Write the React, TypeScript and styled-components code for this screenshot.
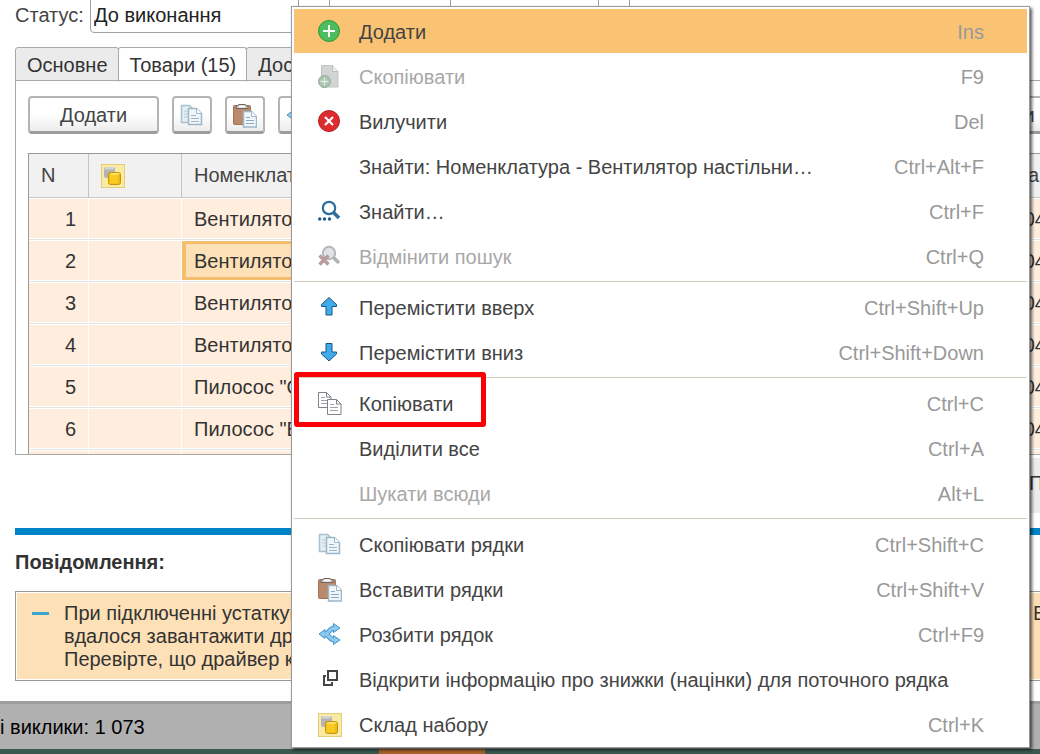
import React from "react";
import styled, { createGlobalStyle, css } from "styled-components";

const GlobalStyle = createGlobalStyle`
  *, *::before, *::after { box-sizing: border-box; }
  html, body { margin: 0; padding: 0; }
  body, button, input, select, table {
    font-family: "Liberation Sans", Arial, sans-serif;
    font-size: 20px;
  }
  body { background: #fff; color: #333; }
`;

/* ---------- page ---------- */

const Page = styled.div`
  position: relative;
  min-height: 100vh;
  display: flex;
  flex-direction: column;
  overflow: hidden;
`;

const Content = styled.main`
  flex: 1;
  display: flex;
  flex-direction: column;
  padding-left: 15px;
`;

const FieldRow = styled.div`
  display: flex;
  height: 33px;
  overflow: hidden;
`;

const FieldLabel = styled.label`
  width: 75px;
  line-height: 31px;
  color: #444;
`;

const FieldSelect = styled.select<{ $width: number; $gap?: number }>`
  appearance: none;
  width: ${(p) => p.$width}px;
  height: 38px;
  margin: -5px 0 0 ${(p) => p.$gap ?? 0}px;
  padding: 2px 3px 0;
  border: 1px solid #a0a0a0;
  border-radius: 4px;
  background: linear-gradient(#a0a0a0, #a0a0a0) right 30px top 0 / 1px 100% no-repeat #fff;
  color: #222;
`;

const Tabs = styled.div`
  display: flex;
  margin-top: 14px;
  height: 34px;
`;

const Tab = styled.button<{ $active?: boolean }>`
  height: ${(p) => (p.$active ? 35 : 34)}px;
  padding: 2px 10px 0 11px;
  border: 1px solid #a8a8a8;
  border-bottom-color: ${(p) => (p.$active ? "#fff" : "#a8a8a8")};
  border-radius: 3px 3px 0 0;
  background: ${(p) => (p.$active ? "#fff" : "#ebebeb")};
  color: #333;
  white-space: nowrap;
  & + & { margin-left: -1px; }
`;

const Panel = styled.section`
  height: 375px;
  margin: -1px -20px 0 0;
  padding: 15px 0 0 12px;
  border: 1px solid #a8a8a8;
  overflow: hidden;
`;

const Toolbar = styled.div`
  display: flex;
  gap: 13px;
  height: 38px;
  margin-bottom: 19px;
`;

const ToolButton = styled.button<{ $wide?: boolean; $last?: boolean }>`
  display: flex;
  align-items: center;
  justify-content: center;
  width: ${(p) => (p.$wide ? 131 : 40)}px;
  padding: 2px 0 0;
  border: 2px solid #b4b4b4;
  border-bottom: 3px solid #9c9c9c;
  border-radius: 4px;
  background: linear-gradient(#fff 50%, #ececec);
  color: #444;
  ${(p) =>
    p.$last &&
    css`
      width: 60px;
      margin-left: auto;
      padding: 2px 0 0;
    `}
`;

const Grid = styled.table`
  width: 100%;
  table-layout: fixed;
  border-collapse: separate;
  border-spacing: 0;
  border-top: 1px solid #999;
  border-left: 1px solid #999;
`;

const HeadCell = styled.th<{ $w?: number; $end?: boolean }>`
  width: ${(p) => (p.$w ? `${p.$w}px` : "auto")};
  height: 44px;
  padding: 0 ${(p) => (p.$end ? 19 : 12)}px 0 12px;
  border-right: 1px solid #c4c4c4;
  border-bottom: 1px solid #c8c8c8;
  background: #f1f1f1;
  color: #444;
  font-weight: normal;
  text-align: ${(p) => (p.$end ? "right" : "left")};
  white-space: nowrap;
  svg { display: block; }
`;

const Cell = styled.td<{ $align?: string; $selected?: boolean }>`
  height: 42px;
  padding: 2px 12px 0 12px;
  border-right: 1px solid #fff;
  border-bottom: 1px solid #e2e2e2;
  background: #ffeedd;
  box-shadow: inset 0 1px #fff, inset 0 -1px #fff;
  color: #333;
  text-align: ${(p) => p.$align ?? "left"};
  white-space: nowrap;
  ${(p) =>
    p.$selected &&
    css`
      background: #fde0b6;
      box-shadow: inset 0 1px #fff, inset 0 -1px #fff, inset 0 0 0 4px #f5be6c;
    `}
`;

const Totals = styled.div`
  align-self: flex-end;
  width: 140px;
  height: 55px;
  margin: 3px 0 15px;
  padding-left: 129px;
  background: #ececec;
  line-height: 50px;
  overflow: hidden;
`;

const Divider = styled.div`
  height: 7px;
  background: #0084c8;
`;

const MessagesTitle = styled.h2`
  margin: 15px 0 17px;
  font-size: 20px;
  line-height: 24px;
`;

const MessageBox = styled.div`
  display: flex;
  height: 90px;
  margin-right: -20px;
  padding: 10px 0 0 16px;
  border: 1px solid #999;
  background: #fde0b6;
  box-shadow: inset 0 0 0 1px #fff;
  line-height: 23px;
`;

const Dash = styled.span`
  width: 17px;
  height: 3px;
  margin: 10px 15px 0 0;
  background: #3ba7cf;
`;

const MessageText = styled.p`
  flex: 1;
  margin: 0;
  white-space: pre-line;
`;

const MessageEnd = styled.span`
  width: 26px;
`;

const StatusBar = styled.footer`
  height: 48px;
  margin-top: 19px;
  border-top: 3px solid #9e9e9e;
  background: #b0b0b0;
  color: #000;
  line-height: 46px;
`;

const Taskbar = styled.div`
  display: flex;
  height: 5px;
  padding-left: 379px;
  background: #3a5a4f;
`;

const TaskButton = styled.span`
  width: 106px;
  background: #a8622a;
`;

/* ---------- context menu ---------- */

const Menu = styled.div`
  position: absolute;
  top: 6px;
  left: 291px;
  right: 10px;
  padding: 2px 2px 0;
  border: 1px solid #9a9a9a;
  background: #fff;
  box-shadow: 2px 2px 3px rgba(0, 0, 0, 0.65);
`;

const MenuItem = styled.button<{ $active?: boolean }>`
  position: relative;
  display: flex;
  align-items: center;
  width: 100%;
  height: 45px;
  padding: 2px 43px 0 24px;
  border: 0;
  border-bottom: 1px solid #fff;
  background: ${(p) => (p.$active ? "#fac373" : "#fff")};
  color: #444;
  text-align: left;
  white-space: nowrap;
  &:disabled { color: #a8a8a8; }
`;

const IconSlot = styled.span`
  display: flex;
  width: 24px;
  height: 24px;
  margin-right: 17px;
`;

const ItemLabel = styled.span`
  flex: 1;
`;

const Shortcut = styled.kbd`
  font-family: inherit;
  color: #999;
`;

const Separator = styled.hr`
  height: 1px;
  margin: 2px 0 3px;
  border: 0;
  background: #cfcdbf;
`;

const Highlight = styled.span`
  position: absolute;
  top: -9px;
  left: 0;
  width: 192px;
  height: 55px;
  border: 5px solid #fb0007;
  border-radius: 3px;
  z-index: 1;
`;

/* ---------- icons ---------- */

const Svg = ({ children }: { children: React.ReactNode }) => (
  <svg width="24" height="24" viewBox="0 0 24 24" fill="none" aria-hidden="true">
    {children}
  </svg>
);

const AddIcon = () => (
  <Svg>
    <circle cx="11" cy="11" r="10.5" fill="#4cbd5c" stroke="#2f9a36" />
    <path d="M11 5v12M5 11h12" stroke="#fff" strokeWidth="2" />
  </Svg>
);

const CopyAddIcon = () => (
  <Svg>
    <path d="M3.500 0.500h11l5.500 6v15.500h-16.500z" fill="#d2d3d4" stroke="#c2c3c4" />
    <path d="M14.500 0.500v6h5.500" fill="#eee" stroke="#bcbdbe" />
    <circle cx="6.500" cy="16.500" r="6" fill="#a9c3ad" stroke="#94ac98" />
    <path d="M6.500 12.500v8M2.500 16.500h8" stroke="#e2ece3" strokeWidth="1.300" />
  </Svg>
);

const DeleteIcon = () => (
  <Svg>
    <circle cx="11" cy="11" r="10.5" fill="#dc2c30" stroke="#b51f22" />
    <path d="M7 7l8 8M15 7l-8 8" stroke="#fff" strokeWidth="2.200" />
  </Svg>
);

const FindIcon = () => (
  <Svg>
    <circle cx="11" cy="8" r="6.200" stroke="#2d6e9e" strokeWidth="2.200" />
    <path d="M15.500 12.500l5.500 5.500" stroke="#2d6e9e" strokeWidth="3.500" />
    <circle cx="1.700" cy="19" r="1.700" fill="#1d5d8e" />
    <circle cx="6.500" cy="19" r="1.700" fill="#1d5d8e" />
    <circle cx="11.500" cy="19" r="1.700" fill="#1d5d8e" />
  </Svg>
);

const CancelFindIcon = () => (
  <Svg>
    <circle cx="11" cy="8" r="6.200" fill="#dfe3e7" stroke="#b3b8bc" strokeWidth="2" />
    <path d="M15.500 12.500l5.500 5.500" stroke="#aeb3b6" strokeWidth="3.500" />
    <path d="M1.500 10.500l9 9M10.500 10.500l-9 9" stroke="#b99d9d" strokeWidth="3.500" />
  </Svg>
);

const UpIcon = () => (
  <Svg>
    <path d="M11 1.500l7.500 7v2h-4.500v8.500h-6v-8.500h-4.500v-2z" fill="#3fabea" stroke="#17567f" strokeLinejoin="round" />
  </Svg>
);

const DownIcon = () => (
  <Svg>
    <path d="M11 20l7.500-7v-2h-4.500v-8.500h-6v8.500h-4.500v2z" fill="#3fabea" stroke="#17567f" strokeLinejoin="round" />
  </Svg>
);

const CopyOutlineIcon = () => (
  <Svg>
    <path d="M0.500 0.500h8l4.500 4.500v10.500h-12.500zM8.500 0.500v4.500h4.500" fill="#fff" stroke="#7d8287" />
    <path d="M3 5.500h4M3 8.500h6M3 11.500h6" stroke="#a0a4a8" />
    <path d="M9.500 7.500h9l4.500 4.500v10.500h-13.500zM18.500 7.500v4.500h4.500" fill="#fff" stroke="#7d8287" />
    <path d="M12 12.500h4M12 15.500h8M12 18.500h8" stroke="#a0a4a8" />
  </Svg>
);

const CopyRowsIcon = () => (
  <Svg>
    <path d="M1.500 1.500h8l4 4v13h-12z" fill="#e4eef5" stroke="#a9bfce" strokeWidth="1.500" />
    <path d="M4 7h4M4 10h4M4 13h4" stroke="#bdccd7" />
    <path d="M8.500 4.500h8l5 5v11h-13z" fill="#f0f6fa" stroke="#9db7c9" strokeWidth="1.500" />
    <path d="M16.500 4.500v5h5" fill="#fff" stroke="#9db7c9" />
    <path d="M11 11.500h5M11 14.500h8M11 17.500h8" stroke="#9fb6c5" strokeWidth="1.200" />
  </Svg>
);

const PasteIcon = () => (
  <Svg>
    <rect x="0.500" y="1.500" width="17" height="19" rx="1" fill="#b98a6b" stroke="#a07355" />
    <path d="M3 4.500v-2l3-2h6l3 2v2z" fill="#c9c6c3" stroke="#6d6661" />
    <rect x="6" y="1.500" width="6" height="2" fill="#fff" />
    <path d="M10.500 7.500h8l5 5v10.500h-13z" fill="#f0f6fa" stroke="#9db7c9" strokeWidth="1.500" />
    <path d="M18.500 7.500v5h5" fill="#fff" stroke="#9db7c9" />
    <path d="M13 13.500h4M13 16.500h8M13 19.500h8" stroke="#86a9bf" />
  </Svg>
);

const SplitIcon = () => (
  <Svg>
    <path d="M4 11h3c4 0 4-6 10-6M7 11c4 0 4 6 10 6" stroke="#4596c8" strokeWidth="5" />
    <path
      d="M1 11l6-4.500v9zM15.500 0.500l6.500 4.500-6.500 4.500zM15.500 12.500l6.500 4.500-6.500 4.500z"
      fill="#8ccaf0"
      stroke="#4596c8"
      strokeLinejoin="round"
    />
    <path d="M4 11h3c4 0 4-6 10-6M7 11c4 0 4 6 10 6" stroke="#8ccaf0" strokeWidth="3" />
  </Svg>
);

const OpenIcon = () => (
  <Svg>
    <rect x="10" y="3" width="9" height="9" stroke="#444" strokeWidth="2" />
    <path d="M8 8h-2v9h8v-3" stroke="#444" strokeWidth="2" />
  </Svg>
);

const SetIcon = () => (
  <Svg>
    <rect x="0.500" y="0.500" width="23" height="23" fill="#fbeaa4" stroke="#e2cd7a" />
    <rect x="3" y="3" width="11" height="11" rx="2" fill="#b4b4b8" />
    <path d="M3 5.500l2-2.500h9l-2 2.500z" fill="#d4d4d8" />
    <rect x="7.500" y="8.500" width="12" height="12" rx="2" fill="#efb90e" stroke="#c99408" />
    <path d="M8.500 11l2-2h8.500l-2 2z" fill="#ffe066" />
    <rect x="8.500" y="11" width="8.500" height="8.500" rx="1" fill="#f9ca24" />
  </Svg>
);

/* ---------- data ---------- */

type Item = {
  label: string;
  keys?: string;
  icon?: React.ReactNode;
  disabled?: boolean;
  active?: boolean;
  marked?: boolean;
};

const groups: Item[][] = [
  [
    { label: "Додати", keys: "Ins", icon: <AddIcon />, active: true },
    { label: "Скопіювати", keys: "F9", icon: <CopyAddIcon />, disabled: true },
    { label: "Вилучити", keys: "Del", icon: <DeleteIcon /> },
    { label: "Знайти: Номенклатура - Вентилятор настільни…", keys: "Ctrl+Alt+F" },
    { label: "Знайти…", keys: "Ctrl+F", icon: <FindIcon /> },
    { label: "Відмінити пошук", keys: "Ctrl+Q", icon: <CancelFindIcon />, disabled: true },
  ],
  [
    { label: "Перемістити вверх", keys: "Ctrl+Shift+Up", icon: <UpIcon /> },
    { label: "Перемістити вниз", keys: "Ctrl+Shift+Down", icon: <DownIcon /> },
  ],
  [
    { label: "Копіювати", keys: "Ctrl+C", icon: <CopyOutlineIcon />, marked: true },
    { label: "Виділити все", keys: "Ctrl+A" },
    { label: "Шукати всюди", keys: "Alt+L", disabled: true },
  ],
  [
    { label: "Скопіювати рядки", keys: "Ctrl+Shift+C", icon: <CopyRowsIcon /> },
    { label: "Вставити рядки", keys: "Ctrl+Shift+V", icon: <PasteIcon /> },
    { label: "Розбити рядок", keys: "Ctrl+F9", icon: <SplitIcon /> },
    { label: "Відкрити інформацію про знижки (націнки) для поточного рядка", icon: <OpenIcon /> },
    { label: "Склад набору", keys: "Ctrl+K", icon: <SetIcon /> },
  ],
];

const rows = [
  "Вентилятор",
  "Вентилятор",
  "Вентилятор",
  "Вентилятор",
  'Пилосос "О',
  'Пилосос "Е',
  "",
];

export default function App() {
  return (
    <Page>
      <GlobalStyle />
      <Content>
        <FieldRow>
          <FieldLabel htmlFor="status">Статус:</FieldLabel>
          <FieldSelect id="status" $width={240}>
            <option>До виконання</option>
          </FieldSelect>
          <FieldSelect aria-label="Стан" $width={180} $gap={120} />
        </FieldRow>

        <Tabs role="tablist">
          <Tab role="tab">Основне</Tab>
          <Tab role="tab" aria-selected $active>
            Товари (15)
          </Tab>
          <Tab role="tab">Дос</Tab>
        </Tabs>

        <Panel>
          <Toolbar>
            <ToolButton $wide>Додати</ToolButton>
            <ToolButton aria-label="Скопіювати рядки">
              <CopyRowsIcon />
            </ToolButton>
            <ToolButton aria-label="Вставити рядки">
              <PasteIcon />
            </ToolButton>
            <ToolButton aria-label="Розбити рядок">
              <SplitIcon />
            </ToolButton>
            <ToolButton $last>и</ToolButton>
          </Toolbar>
          <Grid>
            <thead>
              <tr>
                <HeadCell $w={60}>N</HeadCell>
                <HeadCell $w={93}>
                  <SetIcon />
                </HeadCell>
                <HeadCell>Номенклат</HeadCell>
                <HeadCell $w={90} $end>
                  а
                </HeadCell>
              </tr>
            </thead>
            <tbody>
              {rows.map((name, i) => (
                <tr key={i}>
                  <Cell $align="right">{name && i + 1}</Cell>
                  <Cell />
                  <Cell $selected={i === 1}>{name}</Cell>
                  <Cell $align="right">{name && "04"}</Cell>
                </tr>
              ))}
            </tbody>
          </Grid>
        </Panel>

        <Totals>П</Totals>
        <Divider />
        <MessagesTitle>Повідомлення:</MessagesTitle>
        <MessageBox>
          <Dash />
          <MessageText>
            {"При підключенні устаткув\nвдалося завантажити др\nПеревірте, що драйвер к"}
          </MessageText>
          <MessageEnd>Е</MessageEnd>
        </MessageBox>
      </Content>
      <StatusBar>і виклики: 1 073</StatusBar>
      <Taskbar>
        <TaskButton />
      </Taskbar>

      <Menu role="menu">
        {groups.map((items, g) => (
          <React.Fragment key={g}>
            {g > 0 && <Separator />}
            {items.map((item) => (
              <MenuItem key={item.label} role="menuitem" disabled={item.disabled} $active={item.active}>
                <IconSlot>{item.icon}</IconSlot>
                <ItemLabel>{item.label}</ItemLabel>
                {item.keys && <Shortcut>{item.keys}</Shortcut>}
                {item.marked && <Highlight />}
              </MenuItem>
            ))}
          </React.Fragment>
        ))}
      </Menu>
    </Page>
  );
}
